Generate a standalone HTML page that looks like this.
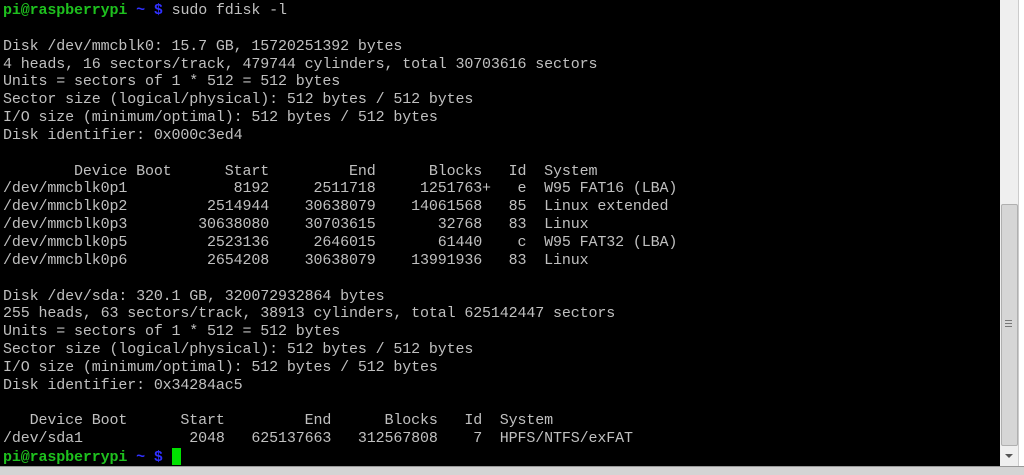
<!DOCTYPE html>
<html><head><style>
html,body{margin:0;padding:0;width:1024px;height:474px;overflow:hidden;background:#fff}
#t{position:absolute;left:0;top:0;width:1000px;height:466px;background:#000}
pre{position:absolute;left:3px;top:2px;margin:0;font-family:"Liberation Mono",monospace;font-size:15px;line-height:17.84px;color:#c0c0c0;letter-spacing:-0.13px}
.g{color:#1ec01e;font-weight:bold}.b{color:#3030ff;font-weight:bold}
.cur{display:inline-block;width:9px;height:17px;background:#00e000;vertical-align:-4px}
#sb{position:absolute;left:1000px;top:0;width:18px;height:466px;background:#efefef;border-right:1px solid #ccc}
#th{position:absolute;left:1001px;top:204px;width:15px;height:240px;background:#d6d6d6;border:1px solid #b0b0b0;border-radius:2px}
#grip{position:absolute;left:1005px;top:320px;width:7px;height:8px;background:repeating-linear-gradient(#777 0 1px,transparent 1px 3px)}
#arr{position:absolute;left:1005px;top:454px;width:0;height:0;border-left:4px solid transparent;border-right:4px solid transparent;border-top:4px solid #555}
#bot{position:absolute;left:0;top:466px;width:1024px;height:8px;background:#d4d4d4;border-top:1px solid #999}
</style></head><body>
<div id="t"></div>
<pre><span class="g">pi@raspberrypi</span> <span class="b">~ $</span> sudo fdisk -l

Disk /dev/mmcblk0: 15.7 GB, 15720251392 bytes
4 heads, 16 sectors/track, 479744 cylinders, total 30703616 sectors
Units = sectors of 1 * 512 = 512 bytes
Sector size (logical/physical): 512 bytes / 512 bytes
I/O size (minimum/optimal): 512 bytes / 512 bytes
Disk identifier: 0x000c3ed4

        Device Boot      Start         End      Blocks   Id  System
/dev/mmcblk0p1            8192     2511718     1251763+   e  W95 FAT16 (LBA)
/dev/mmcblk0p2         2514944    30638079    14061568   85  Linux extended
/dev/mmcblk0p3        30638080    30703615       32768   83  Linux
/dev/mmcblk0p5         2523136     2646015       61440    c  W95 FAT32 (LBA)
/dev/mmcblk0p6         2654208    30638079    13991936   83  Linux

Disk /dev/sda: 320.1 GB, 320072932864 bytes
255 heads, 63 sectors/track, 38913 cylinders, total 625142447 sectors
Units = sectors of 1 * 512 = 512 bytes
Sector size (logical/physical): 512 bytes / 512 bytes
I/O size (minimum/optimal): 512 bytes / 512 bytes
Disk identifier: 0x34284ac5

   Device Boot      Start         End      Blocks   Id  System
/dev/sda1            2048   625137663   312567808    7  HPFS/NTFS/exFAT
<span class="g">pi@raspberrypi</span> <span class="b">~ $</span> <span class="cur"></span></pre>
<div id="sb"></div><div id="th"></div><div id="grip"></div><div id="arr"></div>
<div id="bot"></div>
</body></html>
